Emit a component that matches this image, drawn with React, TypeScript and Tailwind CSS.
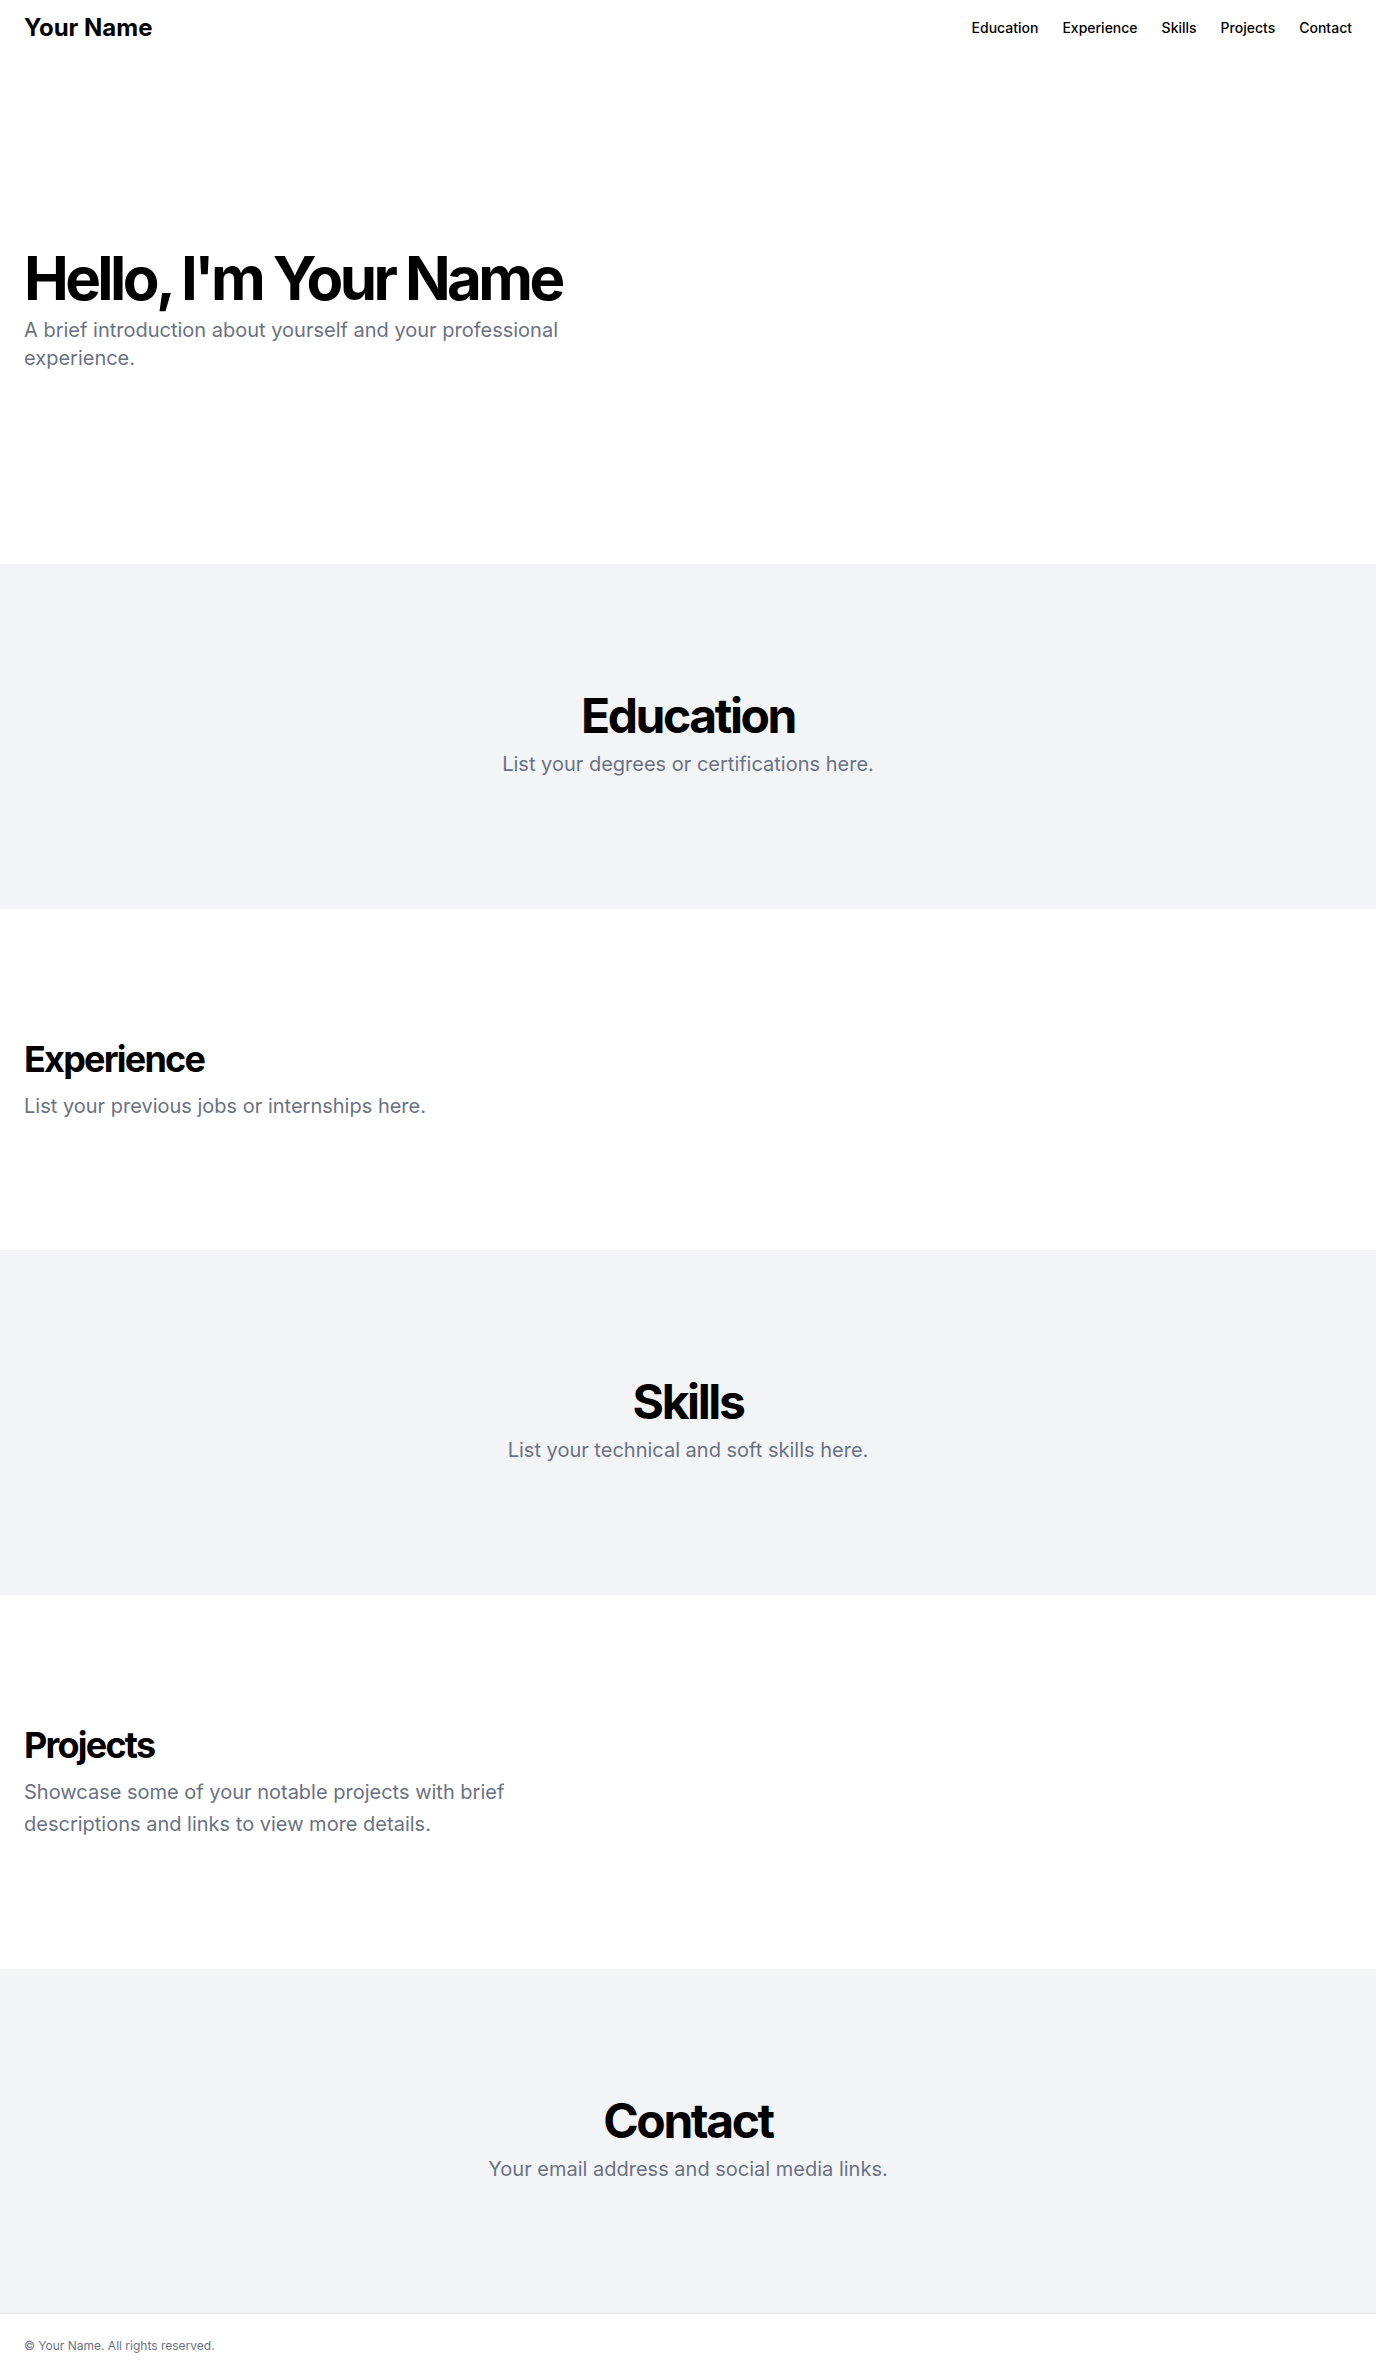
export default function App() {
  return (
    <div className="flex min-h-screen flex-col bg-white text-black" style={{ fontFamily: 'Inter, "Noto Sans", sans-serif' }}>
      <header className="flex h-14 items-center px-6">
        <a href="#" className="text-2xl font-bold">Your Name</a>
        <nav className="ml-auto flex gap-6">
          <a href="#education" className="text-sm font-medium">Education</a>
          <a href="#experience" className="text-sm font-medium">Experience</a>
          <a href="#skills" className="text-sm font-medium">Skills</a>
          <a href="#projects" className="text-sm font-medium">Projects</a>
          <a href="#contact" className="text-sm font-medium">Contact</a>
        </nav>
      </header>

      <main className="flex-1">
        <section className="w-full py-48">
          <div className="px-6">
            <div className="flex flex-col gap-2">
              <h1 className="text-6xl/none font-bold tracking-[-0.06em]">Hello, I'm Your Name</h1>
              <p className="max-w-[600px] text-xl text-gray-500">
                A brief introduction about yourself and your professional experience.
              </p>
            </div>
          </div>
        </section>

        <section id="education" className="w-full bg-gray-100 py-32">
          <div className="flex flex-col items-center gap-2 px-6 text-center">
            <h2 className="text-5xl/none font-bold tracking-tighter">Education</h2>
            <p className="max-w-[900px] text-xl/relaxed text-gray-500">List your degrees or certifications here.</p>
          </div>
        </section>

        <section id="experience" className="w-full py-32">
          <div className="flex flex-col gap-2 px-6">
            <h2 className="text-4xl/tight font-bold tracking-tighter">Experience</h2>
            <p className="max-w-[600px] text-xl/relaxed text-gray-500">List your previous jobs or internships here.</p>
          </div>
        </section>

        <section id="skills" className="w-full bg-gray-100 py-32">
          <div className="flex flex-col items-center gap-2 px-6 text-center">
            <h2 className="text-5xl/none font-bold tracking-tighter">Skills</h2>
            <p className="max-w-[900px] text-xl/relaxed text-gray-500">List your technical and soft skills here.</p>
          </div>
        </section>

        <section id="projects" className="w-full py-32">
          <div className="flex flex-col gap-2 px-6">
            <h2 className="text-4xl/tight font-bold tracking-tighter">Projects</h2>
            <p className="max-w-[600px] text-xl/relaxed text-gray-500">
              Showcase some of your notable projects with brief descriptions and links to view more details.
            </p>
          </div>
        </section>

        <section id="contact" className="w-full bg-gray-100 py-32">
          <div className="flex flex-col items-center gap-2 px-6 text-center">
            <h2 className="text-5xl/none font-bold tracking-tighter">Contact</h2>
            <p className="max-w-[900px] text-xl/relaxed text-gray-500">Your email address and social media links.</p>
          </div>
        </section>
      </main>

      <footer className="flex w-full items-center border-t border-gray-200 px-6 py-6">
        <p className="text-xs text-gray-500">© Your Name. All rights reserved.</p>
      </footer>
    </div>
  )
}
